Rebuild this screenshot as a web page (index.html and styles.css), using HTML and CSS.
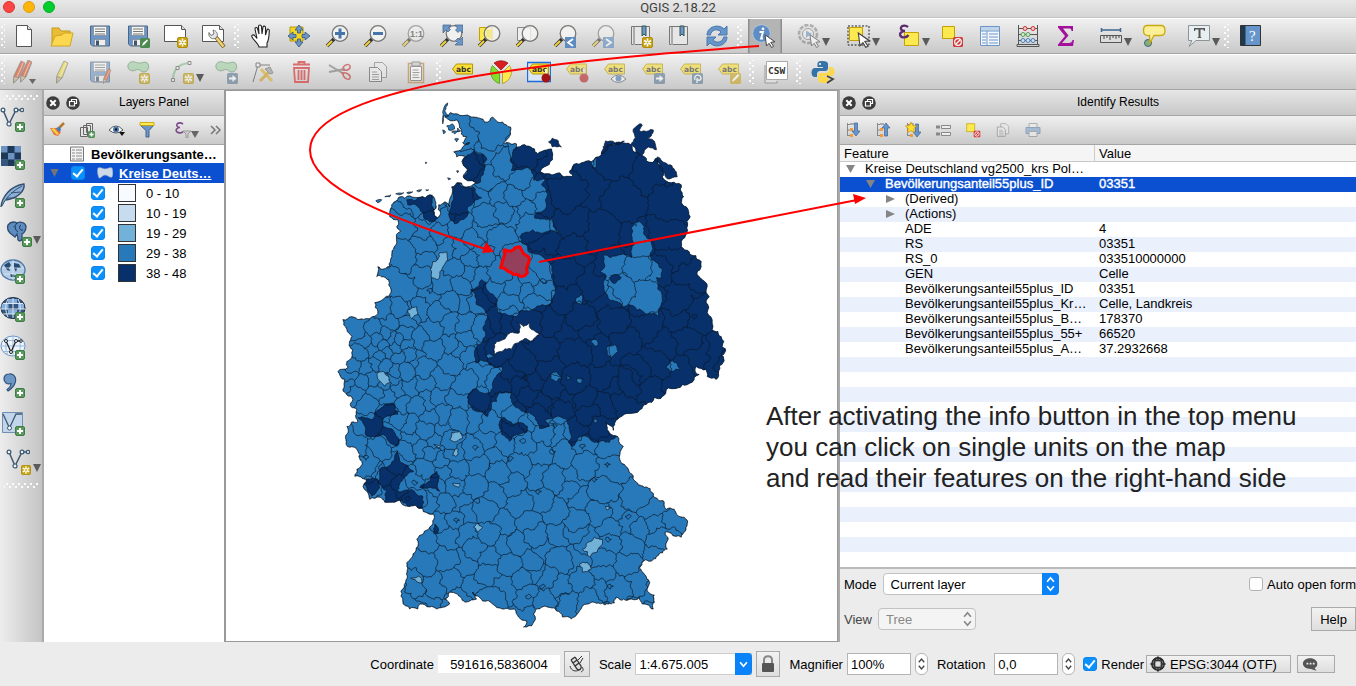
FILE: index.html
```html
<!DOCTYPE html>
<html lang="en">
<head>
<meta charset="utf-8">
<title>QGIS 2.18.22</title>
<link rel="stylesheet" href="styles.css">
</head>
<body>
<svg class="defs" aria-hidden="true">
  <defs>
    <symbol id="plus" viewBox="0 0 10 10"><rect x=".5" y=".5" width="9" height="9" rx="1.5" fill="#5a9a5c" stroke="#3f7c43"/><path d="M5 2v6M2 5h6" stroke="#fff" stroke-width="2"/></symbol>
    <symbol id="star" viewBox="0 0 11 11"><rect x=".5" y=".5" width="10" height="10" rx="1.5" fill="#c9a51a" stroke="#b08d05"/><path d="M5.500 1.500v8M2 3.500l7 4M9 3.500l-7 4" stroke="#fff" stroke-width="1.500"/><circle cx="5.500" cy="5.500" r="1" fill="#c9a51a"/></symbol>
    <symbol id="go" viewBox="0 0 11 11"><rect width="11" height="11" rx="1.500" fill="#5d7b93"/><path d="M2 4.500h3.500v-2.500l4 3.500-4 3.500v-2.500h-3.500z" fill="#fff"/></symbol>
    <symbol id="cursor" viewBox="0 0 12 14"><path d="M1 .8l10 7-4.200.5 2.800 4-2 1.200-2.500-4.200-2.600 2.700z" fill="#fff" stroke="#444"/></symbol>
    <symbol id="lens" viewBox="0 0 24 24"><path d="M9 15l-7 7" stroke="#333" stroke-width="3.500"/><path d="M7 17l-5 5" stroke="#f2d23c" stroke-width="2.200"/><circle cx="15" cy="9.500" r="7.800" fill="#f4f4f2" fill-opacity=".82" stroke="#777" stroke-width="1.300"/></symbol>
    <symbol id="floppy" viewBox="0 0 24 24"><path d="M2.500 2h19v20h-17l-2-2z" fill="#6c96c6" stroke="#47688e"/><path d="M5.500 2.500h13v9h-13z" fill="#f6f6f4" stroke="#777" stroke-width=".6"/><path d="M7 5h10M7 7.500h10M7 10h10" stroke="#777"/><path d="M6.500 15.500h11v6h-11z" fill="#eee" stroke="#777" stroke-width=".6"/><path d="M8 16.500h3v5h-3z" fill="#41566e"/></symbol>
    <symbol id="tag" viewBox="0 0 24 24"><path d="M1.500 9l4-5h16v10h-16z" fill="#f8de35" stroke="#b49608"/><text x="5" y="12" font-size="7.500" font-weight="bold" font-family="DejaVu Sans, sans-serif" fill="#333">abc</text></symbol>
    <symbol id="vec" viewBox="0 0 24 24"><path d="M3 3l6 14L16 3h6" fill="none" stroke="#3d5873" stroke-width="1.500"/><g fill="#eef3f8" stroke="#3d5873" stroke-width="1.200"><circle cx="3" cy="3" r="1.900"/><circle cx="9" cy="17" r="2"/><circle cx="16" cy="3" r="1.900"/><circle cx="22" cy="3" r="1.700"/></g></symbol>
    <symbol id="poly" viewBox="0 0 24 24"><path d="M2 5c2-5 7-3 10-2s8-3 10 1-1 8-4 8c-4 0-4-4-8-2s-9 0-8-5z" fill="#9fcfa2" stroke="#5f8d66"/></symbol>
    <symbol id="arr" viewBox="0 0 8 8"><path d="M0 0h8L4 8z" fill="#5a5a5a"/></symbol>
    <symbol id="pages" viewBox="0 0 24 24"><path d="M8.500 2.500h8l4 4v11h-12z" fill="#e8e8e8" stroke="#777"/><path d="M3.500 7.500h8l4 4v10h-12z" fill="#eee" stroke="#555"/><path d="M6 12h5M6 14.500h7M6 17h7M6 19.500h7" stroke="#777"/></symbol>
    <symbol id="tree" viewBox="0 0 16 16"><path d="M2.500 1v13M2.500 2.500h3M2.500 8h3M2.500 13.500h3" fill="none" stroke="#888"/><path d="M5 6h3v3H5zM5 12h3v3H5z" fill="#f29b38"/><path d="M5 1h4v2H5z" fill="#aaa"/></symbol>
    <symbol id="close" viewBox="0 0 14 14"><circle cx="7" cy="7" r="6.800" fill="#3c3c3c"/><path d="M4.300 4.300l5.400 5.400M9.700 4.300l-5.400 5.400" stroke="#fff" stroke-width="2"/></symbol>
    <symbol id="float" viewBox="0 0 14 14"><circle cx="7" cy="7" r="6.800" fill="#3c3c3c"/><path d="M5.500 5V3.500h5v4H9M3.500 5.500h5v4.500h-5z" fill="none" stroke="#fff" stroke-width="1.200"/></symbol>
    <symbol id="desel" viewBox="0 0 24 24"><path d="M2.500 2.500h12v12h-12z" fill="#fce94f" stroke="#c4a000"/><rect x="13" y="13" width="10" height="10" rx="1.500" fill="#d33c3c"/><circle cx="18" cy="18" r="3.300" fill="none" stroke="#fff" stroke-width="1.200"/><path d="M16 20l4-4" stroke="#fff" stroke-width="1.200"/></symbol>
    <symbol id="chev" viewBox="0 0 10 16"><path d="M2 6l3-3.500L8 6M2 10l3 3.500L8 10" fill="none" stroke="currentColor" stroke-width="1.500"/></symbol>
    <symbol id="pencil" viewBox="0 0 12 24"><path d="M8 1l4 2L6 18l-5.500 5 .5-7.500z" fill="currentColor" stroke="#666" stroke-width=".8"/><path d="M10 3L4 17" stroke="#fff" stroke-opacity=".5" stroke-width="1.200"/><path d="M1 16.500L6 18l-5.500 5z" fill="#cdb58a" stroke="#555" stroke-width=".6"/></symbol>
  </defs>
</svg>

<div class="window">
<header class="titlebar">
  <div class="lights"><i class="red"></i><i class="amber"></i><i class="green"></i></div>
  <h1>QGIS 2.18.22</h1>
</header>

<nav class="toolbar" aria-label="File and navigation">
  <span class="grip first"></span>
  <button aria-label="New"><svg viewBox="0 0 24 24"><path d="M4.500 1.500h11l4 4v17h-15z" fill="#fff" stroke="#555"/><path d="M15.500 1.500v4h4" fill="#ddd" stroke="#555"/></svg></button>
  <button aria-label="Open"><svg viewBox="0 0 24 24"><path d="M2 21V4h7l2 3h9v4" fill="#e9bd35" stroke="#c69a1b"/><path d="M1 22l4-10 7-1 2-2h9l-3 13z" fill="#fcd850" stroke="#d0a622"/></svg></button>
  <button aria-label="Save"><svg><use href="#floppy"/></svg></button>
  <button aria-label="Save as"><svg viewBox="0 0 24 24"><use href="#floppy"/><rect x="14" y="14" width="10" height="10" rx="1.500" fill="#4c8a50"/><path d="M16 22l1-3 4-3.500 1 1-3.500 4z" fill="#fff"/></svg></button>
  <button aria-label="New composer"><svg viewBox="0 0 24 24"><path d="M.5 1.500h17l4 4v12h-21z" fill="#fff" stroke="#555"/><path d="M17.500 1.500v4h4" fill="#ddd" stroke="#555"/><use href="#star" x="13" y="13" width="11" height="11"/></svg></button>
  <button aria-label="Composer manager"><svg viewBox="0 0 24 24"><path d="M.5 1.500h17l4 4v12h-21z" fill="#fff" stroke="#555"/><path d="M17.500 1.500v4h4" fill="#ddd" stroke="#555"/><path d="M13 12l9 11" stroke="#7a6420" stroke-width="4"/><path d="M14.500 14l7 8.500" stroke="#f0d274" stroke-width="2.500"/><path d="M15 13c1-3 0-6-4-7l1 4-3 1.500-2-3c-1 4 2 7 6 6z" fill="#e5e5e5" stroke="#777"/></svg></button>
  <span class="grip"></span>
  <button aria-label="Pan"><svg viewBox="0 0 24 24"><path d="M10 23c-1-4-5-6-7-10-1-2 1.500-3 3-1l2 2.500L6 5c0-2 2-2 2.500-.5L10 10l-.5-7.500c0-2 2.500-2 3 0L13 10l1-7c.5-1.500 2.500-1 2.500.5L16.500 11 18 6c.5-1.500 2.500-1 2.300.8C20 12 20 16 18 19v4z" fill="#fff" stroke="#222" stroke-width="1.100"/></svg></button>
  <button aria-label="Pan to selection"><svg viewBox="0 0 24 24"><path d="M3 3h13v14H3z" fill="#f5d71f" stroke="#b49608"/><path d="M12 1l4 5h-2.500v3h-3V6H8zM12 23l4-5h-2.500v-3h-3v3H8zM1 12l5-4v2.500h3v3H6V16zM23 12l-5-4v2.500h-3v3h3V16z" fill="#6c96c6" stroke="#3f5f86" stroke-width=".9"/></svg></button>
  <button aria-label="Zoom in"><svg viewBox="0 0 24 24"><use href="#lens"/><path d="M15 4.500v10M10 9.500h10" stroke="#4675ab" stroke-width="3"/></svg></button>
  <button aria-label="Zoom out"><svg viewBox="0 0 24 24"><use href="#lens"/><path d="M10 9.500h10" stroke="#4675ab" stroke-width="3"/></svg></button>
  <button aria-label="Zoom native" class="faded"><svg viewBox="0 0 24 24"><use href="#lens"/><text x="9" y="13" font-size="9" font-weight="bold" fill="#444">1:1</text></svg></button>
  <button aria-label="Zoom full"><svg viewBox="0 0 24 24"><use href="#lens"/><path d="M4 1h8L9.500 3.500l2 2-2.500 2.500-2-2L4 9zM24 1v8l-3-2.500-2 2L16.500 6l2-2L16 1zM24 21h-8l2.500-2.500-2-2 2.500-2.500 2 2L24 13z" fill="#6c96c6" stroke="#3f5f86" stroke-width=".7"/></svg></button>
  <button aria-label="Zoom to selection"><svg viewBox="0 0 24 24"><path d="M2.500 3.500h13v13h-13z" fill="#fce94f" stroke="#c4a000"/><use href="#lens"/><path d="M9 5.500h6v9.500c-6 0-7-6-6-9.500z" fill="#f3e88a"/></svg></button>
  <button aria-label="Zoom to layer"><svg viewBox="0 0 24 24"><path d="M2.500 3.500h13v13h-13z" fill="#eee" stroke="#888"/><use href="#lens"/></svg></button>
  <button aria-label="Zoom last"><svg viewBox="0 0 24 24"><use href="#lens"/><rect x="12" y="13" width="11" height="11" fill="#5e8cc0"/><path d="M20 15l-5 3.500 5 3.500" fill="none" stroke="#fff" stroke-width="1.800"/></svg></button>
  <button aria-label="Zoom next" class="faded"><svg viewBox="0 0 24 24"><use href="#lens"/><rect x="12" y="13" width="11" height="11" fill="#5e8cc0"/><path d="M15 15l5 3.500-5 3.500" fill="none" stroke="#fff" stroke-width="1.800"/></svg></button>
  <button aria-label="New bookmark"><svg viewBox="0 0 24 24"><path d="M2.500 2.500h18v18h-18z" fill="#e6e6e6" stroke="#777"/><path d="M5 3v18" stroke="#aaa" stroke-width="2"/><path d="M13 2h4v10l-2-2-2 2z" fill="#6c96c6" stroke="#355"/><use href="#star" x="13" y="13" width="11" height="11"/></svg></button>
  <button aria-label="Show bookmarks"><svg viewBox="0 0 24 24"><path d="M2.500 2.500h18v18h-18z" fill="#e6e6e6" stroke="#777"/><path d="M5 3v18" stroke="#aaa" stroke-width="2"/><path d="M13 2h4v10l-2-2-2 2z" fill="#6c96c6" stroke="#355"/></svg></button>
  <button aria-label="Refresh"><svg viewBox="0 0 24 24"><path d="M2 11C2 3 13-1 19 5l3-3v9h-9l3-3C12 4 6 6 5.500 11z" fill="#6595cb" stroke="#4a78ab"/><path d="M22 13c0 8-11 12-17 6l-3 3v-9h9l-3 3c4 4 10 2 10.500-3z" fill="#6595cb" stroke="#4a78ab"/></svg></button>
  <span class="grip"></span>
  <button aria-label="Identify features" class="pressed"><svg viewBox="0 0 24 24"><circle cx="9.500" cy="9.500" r="8.800" fill="#5e8dc3" stroke="#b9cde3" stroke-width=".8"/><circle cx="11" cy="4.800" r="1.400" fill="#fff"/><path d="M7.500 8H11l-2 6.500h2" fill="none" stroke="#fff" stroke-width="1.800"/><use href="#cursor" x="12" y="10" width="12" height="14"/></svg></button>
  <button aria-label="Run feature action" class="menu"><svg viewBox="0 0 24 24" class="dim"><circle cx="11" cy="10" r="9" fill="#ddd" stroke="#888" stroke-width="2.500" stroke-dasharray="4 1.500"/><circle cx="11" cy="10" r="5.500" fill="#eee" stroke="#777"/><path d="M9 6.500l6 3.500-6 3.500z" fill="#6c96c6"/><use href="#cursor" x="12" y="10" width="12" height="14"/></svg><svg class="arr"><use href="#arr"/></svg></button>
  <button aria-label="Select features" class="menu"><svg viewBox="0 0 24 24"><path d="M1 2h21v19H1z" fill="none" stroke="#222" stroke-dasharray="2 1.500"/><path d="M2.500 3.500h13v13h-13z" fill="#fce94f" stroke="#c4a000"/><use href="#cursor" x="10" y="8" width="14" height="16"/></svg><svg class="arr"><use href="#arr"/></svg></button>
  <button aria-label="Select by expression" class="menu"><svg viewBox="0 0 24 24"><path d="M7.500 8.500h14v13h-14z" fill="#fce94f" stroke="#c4a000"/><path d="M11 3C8 .5 3 2 4 5c.5 2 3 2 4 2-3 0-6 2-4.500 5 1.500 2 6 2 8-1" fill="none" stroke="#5b2a6b" stroke-width="2.300"/></svg><svg class="arr"><use href="#arr"/></svg></button>
  <button aria-label="Deselect"><svg><use href="#desel"/></svg></button>
  <button aria-label="Attribute table"><svg viewBox="0 0 24 24"><path d="M2.500 2.500h19v19h-19z" fill="#f4f8fc" stroke="#6c96c6"/><path d="M3 3h18v3.500H3z" fill="#bfd4ea"/><path d="M3 7h18M9 7v14M4 10h4M4 13h4M4 16h4M4 19h4M11 10h9M11 13h9M11 16h9M11 19h9" stroke="#6c96c6"/></svg></button>
  <button aria-label="Field calculator"><svg viewBox="0 0 24 24"><path d="M2.500 1v19M21.500 1v19M1 20.500h22v2H1zM2 4.500h20M2 10.500h20M2 16.500h20" fill="none" stroke="#555"/><g fill="#f6c9c9" stroke="#c33"><circle cx="9" cy="4.500" r="2"/><circle cx="17" cy="4.500" r="2"/></g><g fill="#cdeccd" stroke="#5a9a5c"><circle cx="7" cy="10.500" r="2"/><circle cx="12" cy="10.500" r="2"/></g><g fill="#cfe0f2" stroke="#4d7fb5"><circle cx="7" cy="16.500" r="2"/><circle cx="12" cy="16.500" r="2"/><circle cx="17" cy="16.500" r="2"/></g></svg></button>
  <button aria-label="Statistics"><svg viewBox="0 0 24 24"><path d="M4 2h15v5h-1.500c0-2-1-2.500-3-2.500H9l5.500 7L8 19h7c2 0 3-1 3.500-3H20l-1 6H4v-1.500l7-8.500-7-8.500z" fill="#a3119c"/></svg></button>
  <button aria-label="Measure" class="menu"><svg viewBox="0 0 24 24"><path d="M2 6h20M2.500 4v4M21.500 4v4" stroke="#3e6690" stroke-width="1.500"/><path d="M1.500 11.500h21v7h-21z" fill="#ddd" stroke="#555"/><path d="M5 12v3M8 12v2M11 12v4M14 12v2M17 12v3M20 12v2" stroke="#444"/></svg><svg class="arr"><use href="#arr"/></svg></button>
  <button aria-label="Map tips"><svg viewBox="0 0 24 24"><circle cx="6" cy="19" r="3.500" fill="#7fae80" stroke="#467"/><path d="M5 1.500h14c4 0 4 3 4 5s0 5-4 5h-7L8 19l-.5-7.500C2 12 1.500 9 1.500 6.500s.5-5 3.500-5z" fill="#fbf098" stroke="#c9a90e" stroke-width="1.300"/></svg></button>
  <button aria-label="Text annotation" class="menu"><svg viewBox="0 0 24 24"><path d="M1.500 1.500h21v15H9l-7 6 3-6H1.500z" fill="#e9eff1" stroke="#8b9499"/><path d="M7 7V4h11v3h-1l-.5-1.500h-3V13l1.500 1h-5l1.500-1V5.500h-3L8 7z" fill="#555"/></svg><svg class="arr"><use href="#arr"/></svg></button>
  <span class="grip"></span>
  <button aria-label="Help contents"><svg viewBox="0 0 24 24"><path d="M1.500 1.500h20v20h-20z" fill="#6595cb" stroke="#333"/><path d="M2 2h4.500v19H2z" fill="#23384d"/><text x="10" y="16.500" font-size="15" font-family="Liberation Serif, serif" fill="#fff">?</text></svg></button>
</nav>

<nav class="toolbar" aria-label="Editing and labels">
  <span class="grip first"></span>
  <button aria-label="Current edits" class="faded"><svg viewBox="0 0 24 24"><g color="#d8451c"><use href="#pencil" x="1" width="12" height="24"/><use href="#pencil" x="8" y="-1" width="12" height="24"/></g><path d="M17 19h7l-3.500 5z" fill="#222"/></svg></button>
  <button aria-label="Toggle editing" class="faded"><svg viewBox="0 0 24 24"><g color="#ecd838"><use href="#pencil" x="5" width="14" height="24"/></g></svg></button>
  <button aria-label="Save edits" class="faded"><svg viewBox="0 0 24 24"><use href="#floppy"/><g color="#e2521c"><use href="#pencil" x="14" y="8" width="10" height="16"/></g></svg></button>
  <button aria-label="Add feature" class="faded"><svg viewBox="0 0 24 24"><use href="#poly"/><use href="#star" x="13" y="13" width="11" height="11"/></svg></button>
  <button aria-label="Add circular string" class="menu faded"><svg viewBox="0 0 24 24"><path d="M2 20C2 9 8 4 18 3" fill="none" stroke="#82b886" stroke-width="2"/><g fill="#eee" stroke="#555"><path d="M.5 18.500h3v3h-3zM5 6.500h3v3H5zM17 1.500h3v3h-3z"/></g><use href="#star" x="12" y="13" width="11" height="11"/></svg><svg class="arr"><use href="#arr"/></svg></button>
  <button aria-label="Move feature" class="faded"><svg viewBox="0 0 24 24"><use href="#poly"/><use href="#go" x="13" y="13" width="11" height="11"/></svg></button>
  <button aria-label="Node tool" class="faded"><svg viewBox="0 0 24 24"><path d="M1 22L6 5h12" fill="none" stroke="#444"/><path d="M4 3h4v4H4z" fill="#eee" stroke="#444"/><path d="M9 9l11 12" stroke="#d9ad25" stroke-width="3"/><path d="M8 21L18 11" stroke="#c89a20" stroke-width="3"/><path d="M13 9l5-2 3 6-3 1z" fill="#999" stroke="#666"/></svg></button>
  <button aria-label="Delete selected" class="trash"><svg viewBox="0 0 24 24"><path d="M4 8h15l-1 14H5zM3 4.500h17M8.500 4V2h6v2M8.500 10v10M11.500 10v10M14.500 10v10" fill="none" stroke="#d85050" stroke-width="1.800"/></svg></button>
  <button aria-label="Cut" class="faded"><svg viewBox="0 0 24 24"><path d="M1 5l15 9M1 12l16-3" stroke="#777" stroke-width="2"/><path d="M15 9c0-4 6-6 7-3s-3 5-7 4zM14 13c4-1 9 2 8 5s-7 0-7-4z" fill="none" stroke="#c22e2e" stroke-width="1.500"/></svg></button>
  <button aria-label="Copy" class="faded"><svg><use href="#pages"/></svg></button>
  <button aria-label="Paste" class="faded"><svg viewBox="0 0 24 24"><path d="M4.500 3.500h15v19h-15z" fill="#e8e0d0" stroke="#b5803a" stroke-width="1.500"/><path d="M6.500 6.500h11v14h-11z" fill="#fff" stroke="#666"/><path d="M8 2h8v4H8z" fill="#ccc" stroke="#666"/><path d="M8.500 10h6M8.500 12.500h7M8.500 15h6M8.500 17.500h7" stroke="#777"/></svg></button>
  <span class="grip"></span>
  <button aria-label="Labeling"><svg><use href="#tag"/></svg></button>
  <button aria-label="Diagrams"><svg viewBox="0 0 24 24"><path d="M12 10L5 3a12 12 0 0 1 14 0z" fill="#d81e1e" stroke="#8a1515" stroke-width=".7"/><path d="M13.500 12.500l7-7a12 12 0 0 1-7 18z" fill="#fce94f" stroke="#a38a10" stroke-width=".7"/><path d="M10.500 12.500l-7-7a12 12 0 0 0 7 18z" fill="#83dd2b" stroke="#4b8d14" stroke-width=".7"/></svg></button>
  <button aria-label="Highlight pinned labels"><svg viewBox="0 0 24 24"><path d="M.5 2.500h23v19H.5z" fill="#d9e6f6" stroke="#1c6cd8" stroke-width="1.300"/><use href="#tag" width="24" height="24"/><path d="M18 9l2 0v7h-2z" fill="#eee"/><circle cx="19" cy="18" r="4.500" fill="#a31515"/></svg></button>
  <button aria-label="Pin labels" class="faded"><svg viewBox="0 0 24 24"><use href="#tag"/><path d="M18 8h2v7h-2z" fill="#fff" stroke="#888" stroke-width=".5"/><circle cx="19" cy="18" r="4.500" fill="#b92222"/></svg></button>
  <button aria-label="Show or hide labels" class="faded"><svg viewBox="0 0 24 24"><use href="#tag"/><path d="M8 19q7-8 15 0-8 7-15 0z" fill="#fff" stroke="#555"/><circle cx="15.500" cy="18.500" r="3" fill="#4c7db5"/></svg></button>
  <button aria-label="Move label" class="faded"><svg viewBox="0 0 24 24"><use href="#tag"/><use href="#go" x="13" y="13" width="11" height="11"/></svg></button>
  <button aria-label="Rotate label" class="faded"><svg viewBox="0 0 24 24"><use href="#tag"/><rect x="13" y="13" width="11" height="11" rx="1.500" fill="#5d7b93"/><path d="M16 20c-2-5 5-7 6-2 0 3-4 3-4 0M18 19v4" fill="none" stroke="#fff" stroke-width="1.300"/></svg></button>
  <button aria-label="Change label" class="faded"><svg viewBox="0 0 24 24"><use href="#tag"/><rect x="13" y="13" width="11" height="11" rx="1.500" fill="#c9a51a"/><path d="M15 22l1-3 5-5 1.500 1.500-5 5z" fill="#fff"/></svg></button>
  <span class="grip"></span>
  <button aria-label="Metadata search"><svg viewBox="0 0 24 24"><path d="M1 5v18h12v-2" fill="#ddd" stroke="#999"/><path d="M2.500 1.500h21v18h-21z" fill="#fff" stroke="#aaa"/><text x="4" y="14" font-size="9.500" font-weight="bold" font-family="DejaVu Sans Mono, monospace" fill="#333">CSW</text></svg></button>
  <span class="grip"></span>
  <button aria-label="Python console"><svg viewBox="0 0 24 24"><path d="M11.500 1C7 1 6.500 2.500 6.500 4v3h5.500v1H4C2 8 .5 9.500.5 12.500S2 17 4 17h2v-3c0-2 1.500-3 3-3h5c2 0 3-1 3-3V4c0-2-2-3-5.500-3z" fill="#3572a5"/><path d="M12 23c5 0 5.500-1.500 5.500-3v-3H12v-1h8c2 0 3.500-1.500 3.500-4.500S22 7 20 7h-2v3c0 2-1.500 3-3 3h-5c-2 0-3 1-3 3v4c0 2 1.500 3 5 3z" fill="#fcd84c"/><circle cx="9" cy="4" r="1" fill="#fff"/><path d="M16 16l6 3-6 4" fill="none" stroke="#444" stroke-width="1.800"/></svg></button>
</nav>

<main class="workspace">
  <nav class="sidebar" aria-label="Manage layers">
    <span class="grip-h"></span>
    <button aria-label="Add vector layer"><svg viewBox="0 0 26 26"><use href="#vec" width="24" height="24"/><use href="#plus" x="15" y="15" width="10" height="10"/></svg></button>
    <button aria-label="Add raster layer"><svg viewBox="0 0 26 26"><path d="M1 1h20v20H1z" fill="#6c93c2"/><path d="M7.500 1h7v7h-7zM1 7.500h7v7H1zM14.500 7.500H21v7h-6.500zM7.500 14.500h7V21h-7z" fill="#1e3857"/><path d="M1 14.500h7V21H1z" fill="#35577f"/><use href="#plus" x="15" y="15" width="10" height="10"/></svg></button>
    <button aria-label="Add SpatiaLite layer"><svg viewBox="0 0 26 26"><path d="M1 24C2 14 10 3 24 1c1 6-5 14-18 16" fill="#8db1d8" stroke="#33506f" stroke-width="1.400"/><path d="M2 23C6 14 14 7 22 3M7 15h10M11 10l9-1" fill="none" stroke="#33506f"/><use href="#plus" x="15" y="15" width="10" height="10"/></svg></button>
    <button aria-label="Add PostGIS layer" class="menu"><svg viewBox="0 0 26 26"><path d="M2 4c3-4 7-3 9-2 4-2 9 0 9 4 0 4-3 7-4 7v5c-1 3-5 2-4-1l-1-4-2 3-5-4C2 10 1 7 2 4z" fill="#5e8cc0" stroke="#2d4c70" stroke-width="1.300"/><path d="M11 2c-3 3-2 7 1 9M15 4c-3 2-1 6 2 5M8 5v1" fill="none" stroke="#1d3450"/><use href="#plus" x="16" y="16" width="10" height="10"/></svg><svg class="arr"><use href="#arr"/></svg></button>
    <button aria-label="Add MSSQL layer"><svg viewBox="0 0 26 26"><ellipse cx="13" cy="11" rx="12" ry="10" fill="#b3cbe5" stroke="#4d78a8" stroke-width="1.300"/><path d="M4 6l5-3 2 3-2 3 1 3-3-1zM14 4l5 1 2 4-4 0-1 4-2-4zM10 15l4 0 1 3-4 0z" fill="#274a70"/><path d="M2 9h22M4 15h18M13 1v20" stroke="#e4eef8" stroke-width=".7"/><use href="#plus" x="15" y="15" width="10" height="10"/></svg></button>
    <button aria-label="Add WMS layer"><svg viewBox="0 0 26 26"><ellipse cx="13" cy="11" rx="12" ry="10.500" fill="#35577f" stroke="#1c2f45"/><path d="M8 2h9v4H8zM1.500 7h7v5h-7zM18 7h6v5h-6zM8 13h9v4H8z" fill="#86addb"/><path d="M1 12h24M3 6.500h20M3 17h20M13 1v20M8 2c-3 6-3 12 0 18M18 2c3 6 3 12 0 18" fill="none" stroke="#dbe8f6"/><use href="#plus" x="15" y="15" width="10" height="10"/></svg></button>
    <button aria-label="Add WFS layer"><svg viewBox="0 0 26 26"><ellipse cx="13" cy="11" rx="12" ry="10" fill="#edf4fc" stroke="#6c96c6"/><path d="M1 11h24M4 5.500h18M4 16.500h18M13 1v20M8 2c-3 6-3 12 0 18M18 2c3 6 3 12 0 18" fill="none" stroke="#9bbbe0"/><path d="M6 6l5 11 5-11h5" fill="none" stroke="#222" stroke-width="1.300"/><g fill="#fff" stroke="#222"><circle cx="6" cy="6" r="1.500"/><circle cx="11" cy="17" r="1.500"/><circle cx="16" cy="6" r="1.500"/><circle cx="21" cy="6" r="1.300"/></g><use href="#plus" x="15" y="15" width="10" height="10"/></svg></button>
    <button aria-label="Add delimited text layer"><svg viewBox="0 0 26 26"><path d="M9 1c5-1 8 4 6 9-1 4-4 6-7 8l-1-1.500c3-2 4-4 4-6C7 12 4 9 4 6s2-5 5-5z" fill="#6c96c6" stroke="#33527a" stroke-width="1.200"/><use href="#plus" x="15" y="15" width="10" height="10"/></svg></button>
    <button aria-label="Add virtual layer"><svg viewBox="0 0 26 26"><path d="M2.500 1.500h20v20h-20z" fill="#c3d5ea" stroke="#6f8fb3"/><path d="M3 3l6.500 14L16 3h6" fill="none" stroke="#3d5873" stroke-width="1.300"/><circle cx="9.500" cy="17" r="2" fill="#fff" stroke="#3d5873"/><use href="#plus" x="15" y="15" width="10" height="10"/></svg></button>
    <button aria-label="New shapefile layer" class="menu"><svg viewBox="0 0 26 26"><use href="#vec" width="24" height="24"/><use href="#star" x="15" y="16" width="10" height="10"/></svg><svg class="arr"><use href="#arr"/></svg></button>
    <span class="grip-h"></span>
  </nav>

  <section class="panel layers">
    <header class="panel-title">
      <button aria-label="Close panel"><svg><use href="#close"/></svg></button><button aria-label="Float panel"><svg><use href="#float"/></svg></button>
      <h2>Layers Panel</h2>
    </header>
    <div class="panel-tools">
      <button aria-label="Style dock"><svg viewBox="0 0 16 16"><path d="M15 1l-6 6" stroke="#b9792d" stroke-width="2.500"/><path d="M1 6l7 0 4 4-3 4-4-1z" fill="#e5733d"/><path d="M7 6l4-1 1 3-2 2z" fill="#477cc0"/><path d="M2 7l6 6 2-1-5-6z" fill="#f3cf43"/></svg></button>
      <button aria-label="Add group"><svg viewBox="0 0 16 16"><path d="M1.500 5.500h7v9h-7zM4.500 3.500h7v9h-7zM7.500 1.500h6v9h-6z" fill="#e6e6e6" stroke="#666"/><use href="#plus" x="9" y="9" width="7" height="7"/></svg></button>
      <button aria-label="Visibility"><svg viewBox="0 0 16 16"><path d="M0 8q7-8 14 0-7 6-14 0z" fill="#fff" stroke="#555"/><circle cx="7" cy="7.500" r="3" fill="#4c7db5"/><circle cx="7" cy="7.500" r="1.200" fill="#111"/><path d="M10 10h6l-3 4z" fill="#111"/></svg></button>
      <button aria-label="Filter legend"><svg viewBox="0 0 16 16"><path d="M1 3h14L10 8.500V15H7V8.500z" fill="#6c96c6" stroke="#42648d"/><path d="M1 .5h14v3H1z" fill="#fce94f" stroke="#c4a000" stroke-width=".8"/></svg></button>
      <button aria-label="Filter by expression" class="wide"><svg viewBox="0 0 24 16"><path d="M8 2C5 0 1 1 2 4c.5 1.500 2.500 1.500 3 1.500C2 5.500 0 8 2 10c2 1.500 5 1 6-.5" fill="none" stroke="#7b4b8b" stroke-width="1.600"/><path d="M8 9h8l-3 3v4h-2v-4z" fill="#ccc" stroke="#999"/><path d="M16 9h8l-4 7z" fill="#666"/></svg></button>
      <button aria-label="More tools"><svg viewBox="0 0 16 16"><path d="M4 4l4 4-4 4M9 4l4 4-4 4" fill="none" stroke="#777" stroke-width="1.500"/></svg></button>
    </div>
    <ul class="layer-tree">
      <li class="table-layer"><svg viewBox="0 0 16 16"><path d="M1.500 1h13v14h-13z" fill="#f3f3f3" stroke="#777"/><path d="M3 4h3M7 4h6M3 7h3M7 7h6M3 10h3M7 10h6M3 13h3M7 13h6" stroke="#888"/></svg><b>Bevölkerungsante…</b></li>
      <li class="selected"><svg class="twist" viewBox="0 0 8 8"><path d="M0 0h8L4 8z" fill="#757575"/></svg><input type="checkbox" checked aria-label="Kreise Deutschland"><svg viewBox="0 0 16 16"><path d="M1 3c4-1 4 1 7 1s4-2 7-1c1 4 1 6 0 9-3 1-4-2-7-2s-3 3-6 3c-1-3-2-6-1-10z" fill="#cdd9e8" stroke="#a9b9cd" stroke-width=".6"/></svg><a href="#map">Kreise Deuts…</a></li>
      <li><label><input type="checkbox" checked><i class="sw c0"></i>0 - 10</label></li>
      <li><label><input type="checkbox" checked><i class="sw c1"></i>10 - 19</label></li>
      <li><label><input type="checkbox" checked><i class="sw c2"></i>19 - 29</label></li>
      <li><label><input type="checkbox" checked><i class="sw c3"></i>29 - 38</label></li>
      <li><label><input type="checkbox" checked><i class="sw c4"></i>38 - 48</label></li>
    </ul>
  </section>

  <section class="map" id="map"><svg id="districts" viewBox="226 91 612 551" role="img" aria-label="Districts of Germany by share of population aged 55 plus"></svg></section>

  <section class="panel identify">
    <header class="panel-title">
      <button aria-label="Close panel"><svg><use href="#close"/></svg></button><button aria-label="Float panel"><svg><use href="#float"/></svg></button>
      <h2>Identify Results</h2>
    </header>
    <div class="panel-tools">
      <button aria-label="Expand tree"><svg viewBox="0 0 16 16"><use href="#tree"/><path d="M9.500 1h3v8h2.500l-4 5-4-5h2.500z" fill="#6595cb" stroke="#3f6390" stroke-width=".7"/></svg></button>
      <button aria-label="Collapse tree"><svg viewBox="0 0 16 16"><use href="#tree"/><path d="M9.500 14h3V6h2.500l-4-5-4 5h2.500z" fill="#6595cb" stroke="#3f6390" stroke-width=".7"/></svg></button>
      <button aria-label="Expand new results"><svg viewBox="0 0 16 16"><use href="#tree"/><path d="M10.500 2h3v8H16l-4 5-4-5h2.500z" fill="#6595cb" stroke="#3f6390" stroke-width=".7"/><path d="M6 0l1.700 3.500 3.800.5-2.700 2.600.6 3.900L6 8.700l-3.400 1.800.6-3.900L.5 4l3.800-.5z" fill="#fce030" stroke="#d0940c" stroke-width=".8"/></svg></button>
      <button aria-label="Clear results"><svg viewBox="0 0 16 16"><path d="M1 3.500h4v3H1zM1 10.500h4v3H1z" fill="#888"/><path d="M6.500 3.500h9v3h-9zM6.500 10.500h9v3h-9z" fill="#eee" stroke="#888"/></svg></button>
      <button aria-label="Clear highlights"><svg><use href="#desel"/></svg></button>
      <button aria-label="Copy feature" class="faded"><svg><use href="#pages"/></svg></button>
      <button aria-label="Print" class="faded"><svg viewBox="0 0 16 16"><path d="M4 1.500h8v5H4z" fill="#eee" stroke="#888"/><path d="M1 5.500h14v6H1z" fill="#7ea3cc" stroke="#5f7f9f"/><path d="M4 9.500h8v5H4z" fill="#eee" stroke="#888"/></svg></button>
    </div>
    <div class="results">
      <table>
        <thead><tr><th>Feature</th><th>Value</th></tr></thead>
        <tbody>
          <tr class="d0"><td><i class="open"></i>Kreise Deutschland vg2500_krs Pol…</td><td></td></tr>
          <tr class="d1 current"><td><i class="open"></i>Bevölkerungsanteil55plus_ID</td><td>03351</td></tr>
          <tr class="d2"><td><i class="shut"></i>(Derived)</td><td></td></tr>
          <tr class="d2"><td><i class="shut"></i>(Actions)</td><td></td></tr>
          <tr class="d2"><td>ADE</td><td>4</td></tr>
          <tr class="d2"><td>RS</td><td>03351</td></tr>
          <tr class="d2"><td>RS_0</td><td>033510000000</td></tr>
          <tr class="d2"><td>GEN</td><td>Celle</td></tr>
          <tr class="d2"><td>Bevölkerungsanteil55plus_ID</td><td>03351</td></tr>
          <tr class="d2"><td>Bevölkerungsanteil55plus_Kr…</td><td>Celle, Landkreis</td></tr>
          <tr class="d2"><td>Bevölkerungsanteil55plus_B…</td><td>178370</td></tr>
          <tr class="d2"><td>Bevölkerungsanteil55plus_55+</td><td>66520</td></tr>
          <tr class="d2"><td>Bevölkerungsanteil55plus_A…</td><td>37.2932668</td></tr>
        </tbody>
      </table>
    </div>
    <form class="options">
      <div class="option-row">
        <label for="mode">Mode</label>
        <span class="select mode"><select id="mode"><option>Current layer</option></select><svg><use href="#chev"/></svg></span>
        <label class="auto"><input type="checkbox">Auto open form</label>
      </div>
      <div class="option-row">
        <label for="view" class="muted">View</label>
        <span class="select view"><select id="view" disabled><option>Tree</option></select><svg><use href="#chev"/></svg></span>
        <button type="button" class="push help">Help</button>
      </div>
    </form>
  </section>
</main>

<footer class="statusbar">
  <label for="coord">Coordinate</label><input id="coord" class="coord" value="591616,5836004">
  <button class="push square" aria-label="Toggle extents"><svg viewBox="0 0 20 20"><path d="M4 6l6 9c2 2 5 0 4-3L8 3M4 6l4-3M6 9l4-3M8 12l4-3" fill="#ddd" stroke="#333" stroke-width="1.300"/><path d="M11 6l4-4M13 9l3-5M3 12c1 5 6 6 9 4M15 13c2 3 1 4-1 5" fill="none" stroke="#333"/></svg></button>
  <label for="scale" class="gap">Scale</label><span class="select scale"><input id="scale" value="1:4.675.005"><svg viewBox="0 0 10 16"><path d="M2 6.500L5 10l3-3.500" fill="none" stroke="#fff" stroke-width="1.500"/></svg></span>
  <button class="push square lock" aria-label="Lock scale"><svg viewBox="0 0 20 20"><path d="M6 9V6c0-5 8-5 8 0v3" fill="none" stroke="#888" stroke-width="2"/><rect x="4" y="9" width="12" height="9" rx="1" fill="#555"/></svg></button>
  <label for="mag" class="gap">Magnifier</label><input id="mag" class="num" value="100%"><button class="spin" aria-label="Step magnifier"><svg><use href="#chev"/></svg></button>
  <label for="rot" class="gap">Rotation</label><input id="rot" class="num rotation" value="0,0"><button class="spin" aria-label="Step rotation"><svg><use href="#chev"/></svg></button>
  <label class="render"><input type="checkbox" checked>Render</label>
  <button class="push crs"><svg viewBox="0 0 18 18"><circle cx="9" cy="9" r="7" fill="#777" stroke="#222" stroke-width="1.500"/><path d="M9 0v18M0 9h18M4 4q5 3 10 0M4 14q5-3 10 0M6 3q-3 6 0 12M12 3q3 6 0 12" fill="none" stroke="#222"/><circle cx="9" cy="9" r="3" fill="#ddd"/></svg>EPSG:3044 (OTF)</button>
  <button class="push messages" aria-label="Messages"><svg viewBox="0 0 20 16"><path d="M9 1c5 0 8 3 8 6s-1 4-3 5l2 3-6-2C4 13 1 10 1 7s3-6 8-6z" fill="#555"/><path d="M5 7h2M8.500 7h2M12 7h2" stroke="#eee" stroke-width="2"/></svg></button>
</footer>
</div>

<svg class="arrows" viewBox="0 0 1356 686" aria-hidden="true">
  <path d="M759 46C600 58 310 80 310 150C310 190 400 220 485 249" fill="none" stroke="#f00" stroke-width="2"/>
  <path d="M494 252l-12 1 4-11z" fill="#f00"/>
  <path d="M539 262L857 200" fill="none" stroke="#f00" stroke-width="2"/>
  <path d="M866 198l-11 6-2-10z" fill="#f00"/>
</svg>
<p class="note">After activating the info button in the top menu<br>you can click on single units on the map<br>and read their features on the right-hand side</p>
<script src="map.js"></script>
</body>
</html>
```
FILE: styles.css
```css
* { box-sizing: border-box; }
body { margin: 0; background: #ececec; color: #000; font: 13px/15px "Liberation Sans", Arial, sans-serif; overflow: hidden; }
h1, h2, p, ul { margin: 0; padding: 0; }
button, input, select { font: inherit; color: inherit; margin: 0; }
button { padding: 0; border: 0; background: none; }
svg { display: block; flex: none; }
.defs { position: absolute; width: 0; height: 0; }
.window { display: flex; flex-direction: column; height: 100vh; }

.titlebar { position: relative; height: 18px; background: linear-gradient(#e8e8e8, #d5d5d5); display: flex; justify-content: center; align-items: center; border-bottom: 1px solid #c4c4c4; }
.titlebar h1 { font: 13px/15px Roboto, sans-serif; color: #404040; padding-bottom: 2px; }
.lights { position: absolute; left: 3px; top: 1px; display: flex; gap: 8px; }
.lights i { width: 12px; height: 12px; border-radius: 50%; border: 1px solid #e0332e; background: #fc4645; }
.lights .amber { background: #fdb50a; border-color: #e09e12; }
.lights .green { background: #00ce2c; border-color: #0cae28; }

.toolbar { display: flex; align-items: center; height: 36px; background: linear-gradient(#f0f0f0, #c9c9c9); border-top: 1px solid #fff; border-bottom: 1px solid #a5a5a5; }
.toolbar button { display: flex; align-items: center; justify-content: center; flex: none; width: 38px; height: 34px; }
.toolbar svg { width: 24px; height: 24px; }
.toolbar .menu { width: 50px; padding-left: 14px; justify-content: flex-start; gap: 1px; }
.toolbar .arr, .sidebar .arr { width: 8px; height: 8px; margin-top: 12px; }
.toolbar .pressed { background: linear-gradient(90deg, #8d8d8d 0 1px, #b4b4b4 2px 32px, #8d8d8d 33px) no-repeat 3px 0 / 34px 34px; }
.faded svg:not(.arr), .dim { opacity: .6; }
.trash svg { opacity: .8; }
.grip { flex: none; width: 9px; height: 24px; background: radial-gradient(circle, #fbfbfb 1px, transparent 1px) 0 0 / 4px 6px repeat-y, radial-gradient(circle, #fbfbfb 1px, transparent 1px) 3px 3px / 4px 6px repeat-y; }
.grip.first { width: 5px; }

.workspace { flex: 1; min-height: 0; display: grid; grid-template-columns: 43px 181px minmax(0, 1fr) 518px; }
.sidebar { background: linear-gradient(90deg, #ededed, #c4c4c4); border-right: 1px solid #aaa; padding-top: 4px; display: flex; flex-direction: column; }
.sidebar button { flex: none; height: 38px; display: flex; align-items: center; padding-bottom: 2px; }
.sidebar svg { width: 26px; height: 26px; }
.sidebar .menu { padding-left: 6px; gap: 1px; }
.grip-h { flex: none; height: 8px; margin: 0 4px; background: radial-gradient(circle, #fbfbfb 1px, transparent 1px) 0 0 / 6px 4px repeat-x, radial-gradient(circle, #fbfbfb 1px, transparent 1px) 3px 3px / 6px 4px repeat-x; }

.panel { display: flex; flex-direction: column; min-width: 0; overflow: hidden; }
.layers { border-left: 1px solid #aaa; background: #fff; }
.panel-title { flex: none; height: 26px; display: flex; align-items: center; gap: 6px; padding: 0 2px; background: linear-gradient(#e6e6e6, #c8c8c8); border-bottom: 1px solid #a5a5a5; }
.panel-title svg { width: 14px; height: 14px; }
.panel-title h2 { flex: 1; text-align: center; font-size: 12px; font-weight: normal; line-height: 15px; }
.panel-tools { flex: none; height: 29px; display: flex; align-items: center; gap: 14px; padding-left: 5px; background: linear-gradient(#f0f0f0, #c9c9c9); border-bottom: 1px solid #a5a5a5; }
.panel-tools svg { width: 16px; height: 16px; }
.panel-tools .wide svg { width: 24px; }
.panel-tools .wide { padding-left: 6px; margin-right: -6px; }

.layer-tree { list-style: none; }
.layer-tree li { height: 20px; display: flex; align-items: center; }
.layer-tree .table-layer { height: 18px; padding-left: 25px; gap: 6px; }
.layer-tree li svg { width: 16px; height: 16px; }
.layer-tree .selected { background: #0a50d0; color: #fff; font-weight: bold; padding-left: 6px; }
.layer-tree li .twist { width: 9px; height: 8px; margin-right: 12px; }
.selected input { margin-right: 12px; }
.selected a { color: inherit; margin-left: 6px; }
.layer-tree label { display: flex; align-items: center; padding-left: 47px; }
.sw { width: 18px; height: 18px; margin: 0 10px 0 13px; border: 1px solid #333; }
.c0 { background: #f7fbff; } .c1 { background: #c8dcf0; } .c2 { background: #73b2d8; } .c3 { background: #2879b9; } .c4 { background: #08306b; }

input[type=checkbox] { appearance: none; flex: none; width: 14px; height: 14px; border-radius: 3px; border: 1px solid #b5b5b5; background: #fff; display: grid; place-items: center; }
input[type=checkbox]:checked { background: #0a91fc; border-color: #0a84ee; }
input[type=checkbox]:checked::before { content: ""; width: 4px; height: 8px; margin-top: -2px; border: solid #fff; border-width: 0 2px 2px 0; transform: rotate(40deg); }

.map { background: #fff; border: solid #999; border-width: 1px 1px 1px 2px; min-width: 0; min-height: 0; overflow: hidden; }
.map svg { width: 100%; height: 100%; }

.identify { border-left: 2px solid #aaa; background: #ececec; }
.results { flex: 1; min-height: 0; background: repeating-linear-gradient(#fff 0 15px, #eaf1fd 15px 30px) 0 17px; border-bottom: 2px solid #bbb; overflow: hidden; }
table { width: 100%; border-collapse: separate; border-spacing: 0; table-layout: fixed; }
th { width: 254px; height: 17px; padding: 0 4px; text-align: left; font-weight: normal; line-height: 15px; background: #f5f5f5; border-bottom: 1px solid #c8c8c8; }
th + th { width: auto; border-left: 1px solid #ccc; }
td { height: 15px; padding: 0 5px; white-space: nowrap; line-height: 14px; vertical-align: top; }
td i { float: left; width: 9px; height: 8px; margin: 3px 0 0 -19px; background: #858585; clip-path: polygon(0 0, 100% 0, 50% 100%); }
td .shut { clip-path: polygon(0 0, 100% 50%, 0 100%); }
.d0 td:first-child { padding-left: 25px; }
.d1 td:first-child { padding-left: 45px; }
.d2 td:first-child { padding-left: 65px; }
.current { background: #0a50d0; color: #fff; -webkit-text-stroke: 0.4px #fff; }

.options { flex: none; padding: 3px 0 11px 4px; display: flex; flex-direction: column; gap: 11px; }
.option-row { display: flex; align-items: center; height: 24px; gap: 6px; white-space: nowrap; }
.select { position: relative; display: block; height: 22px; }
.select select { appearance: none; width: 100%; height: 100%; padding: 0 7px; background: #fff; border: 1px solid #c2c2c2; border-radius: 4px; outline: 0; }
.select svg { position: absolute; right: 0; top: 0; width: 17px; height: 100%; padding: 2px; background: #0a82f8; color: #fff; border-radius: 0 4px 4px 0; }
.mode { width: 176px; }
.view { width: 98px; }
.view select { background: #f4f4f4; color: #888; opacity: 1; }
.view svg { background: none; color: #888; }
.muted { color: #444; }
.auto { margin-left: auto; display: flex; align-items: center; gap: 4px; }
.push { display: flex; align-items: center; justify-content: center; border: 1px solid #aaa; background: linear-gradient(#f2f2f2, #dedede); height: 24px; }
.help { width: 45px; margin-left: auto; }

.statusbar { flex: none; height: 44px; display: flex; align-items: center; justify-content: flex-end; gap: 4px; padding-right: 21px; white-space: nowrap; }
.statusbar > input, .scale input { height: 22px; padding: 0 3px; border: 1px solid #b5b5b5; background: #fff; border-radius: 0; }
.statusbar .coord { width: 122px; height: 18px; border: 0; text-align: center; }
.statusbar .num { width: 64px; }
.statusbar .rotation { margin-left: 5px; }
.square { width: 26px; height: 26px; }
.square svg { width: 20px; height: 20px; }
.lock { width: 24px; }
.gap { margin-left: 5px; }
.scale { width: 117px; }
.scale input { width: 100%; border-color: #ccc; }
.spin { width: 13px; height: 22px; border: 1px solid #b5b5b5; border-radius: 6px; background: #fff; color: #444; }
.spin svg { width: 11px; height: 18px; padding: 1px; }
.render { display: flex; align-items: center; gap: 4px; margin: 0 -2px 0 4px; }
.crs { width: 145px; height: 18px; gap: 4px; justify-content: flex-start; padding-left: 3px; }
.crs svg { width: 16px; height: 16px; }
.messages { width: 38px; height: 18px; margin-left: 2px; justify-content: flex-start; padding-left: 4px; }
.messages svg { width: 18px; height: 15px; }

.arrows { position: absolute; left: 0; top: 0; width: 1356px; height: 686px; pointer-events: none; }
.note { position: absolute; left: 766px; top: 401px; font-size: 26px; line-height: 31px; color: #222; white-space: nowrap; }
```
FILE: map.js
```js
(function () {
  var svg = document.getElementById('districts');
  var NS = 'http://www.w3.org/2000/svg';
  var state = 7;
  function rnd() { state = (state * 16807) % 2147483647; return state / 2147483647 - 0.5; }
  function el(name, attrs, parent) {
    var e = document.createElementNS(NS, name);
    for (var k in attrs) e.setAttribute(k, attrs[k]);
    parent.appendChild(e);
    return e;
  }
  function pairs(s) {
    return s.trim().split(/\s+/).map(function (p) { return p.split(',').map(Number); });
  }
  // Splits a segment again and again, moving each midpoint sideways
  function rough(a, b, amp, out) {
    var dx = b[0] - a[0], dy = b[1] - a[1], len = Math.sqrt(dx * dx + dy * dy);
    if (len < 3) { out.push(b); return; }
    var k = rnd() * amp;
    var m = [(a[0] + b[0]) / 2 - dy * k, (a[1] + b[1]) / 2 + dx * k];
    rough(a, m, amp, out); rough(m, b, amp, out);
  }
  function line(pts) {
    return 'M' + pts.map(function (p) { return p[0].toFixed(1) + ' ' + p[1].toFixed(1); }).join('L');
  }
  function ring(s, amp) {
    var p = pairs(s), out = [p[0]];
    p.forEach(function (a, i) { rough(a, p[(i + 1) % p.length], amp, out); });
    return line(out) + 'Z';
  }

  var land = '445,117 458,114 468,115 474,117 485,122 493,117 497,121 503,122 511,127 511,133 508,139 504,143 510,143 517,144 516,150 518,147 527,146 535,149 538,154 547,150 552,149 553,160 545,167 541,172 545,174 550,174 560,173 565,177 573,177 570,172 573,167 582,163 592,162 598,157 602,153 607,147 615,145 625,143 632,145 635,152 642,155 647,161 655,161 658,158 663,168 663,177 672,183 682,185 683,193 687,207 691,217 688,227 688,233 682,242 682,247 690,252 702,262 702,267 698,272 703,280 708,287 707,293 710,297 707,303 708,313 713,323 713,330 722,337 723,347 726,349 724,363 717,380 708,377 707,370 697,367 696,372 700,375 683,385 677,389 667,390 663,397 655,398 647,405 638,413 628,414 618,420 614,431 609,425 606,422 608,428 612,435 624,447 620,458 625,465 630,473 637,483 648,488 655,498 665,503 667,510 675,510 685,518 686,532 682,538 672,534 666,533 669,540 668,550 658,557 640,569 645,575 650,585 648,592 655,596 654,610 643,605 640,598 632,600 617,598 615,604 603,604 588,605 580,612 575,618 572,620 563,618 557,612 543,608 537,610 535,622 527,628 524,628 527,622 519,618 515,610 503,610 493,605 483,602 473,593 477,600 467,603 458,595 450,593 445,600 450,605 445,608 430,608 420,605 418,610 410,610 403,602 406,583 407,567 413,557 417,540 430,528 434,515 422,509 408,507 400,501 395,503 385,503 380,498 370,500 367,492 364,485 367,480 355,477 357,470 362,462 360,455 350,448 346,440 347,427 358,422 357,410 351,407 353,400 343,390 345,380 338,372 348,368 347,362 353,350 352,337 347,330 343,320 352,317 358,320 373,317 378,312 375,303 385,298 391,293 389,280 377,277 378,267 390,267 392,257 397,243 398,220 390,217 392,207 400,197 410,196 430,195 434,197 436,205 434,211 438,218 441,214 439,205 445,202 450,207 451,197 452,187 457,183 465,187 473,185 477,183 468,181 464,175 468,170 463,160 467,157 457,157 454,152 463,147 470,143 463,143 467,137 460,128 457,120';

  var dark = [
    '474,151 487,158 485,170 481,182 473,184 464,177 468,170 463,160',
    '516,148 540,140 560,148 556,165 541,180 534,180 530,168 522,170 512,171',
    '547,172 600,120 700,120 740,300 740,400 612,440 610,443 595,443 587,437 573,447 569,442 570,430 568,423 555,418 545,422 550,427 540,429 538,422 530,413 515,407 512,393 500,393 497,402 491,403 488,417 473,410 468,397 477,389 491,393 493,383 502,373 503,368 487,362 476,363 477,347 486,337 487,320 485,310 477,305 471,290 482,280 487,283 490,293 497,303 498,313 517,317 520,312 537,307 550,305 556,293 552,277 550,263 543,257 530,253 528,247 520,237 533,230 547,232 560,232 552,219 547,220 535,218 537,213 547,205 548,195 542,185',
    '407,200 420,197 432,195 433,207 438,218 430,222 418,207 408,205',
    '452,187 458,183 465,187 473,187 482,198 468,207 467,217 455,224 450,218 452,203',
    '375,413 385,405 395,405 398,415 385,418 383,427 398,438 397,447 383,435 367,437 358,418 373,420',
    '398,452 405,465 414,472 403,480 398,492 412,490 423,497 422,510 402,501 395,503 385,503 387,492 378,483 380,470 387,468',
    '378,480 380,488 372,497 364,485 367,480',
    '437,472 440,492 420,488',
    '503,418 513,425 528,427 527,433 517,435 510,442 502,435 500,428'
  ];
  var mid = [
    '638,222 645,227 645,235 653,247 652,260 663,270 663,278 657,278 659,290 663,302 659,310 660,317 647,315 637,310 635,307 623,307 610,300 606,293 607,277 601,272 603,255 620,255 632,258 635,243 632,228',
    '592,162 598,157 597,167 594,169', '577,298 582,295 583,304 577,303',
    '591,341 597,340 599,345 595,347', '608,347 615,345 619,352 612,358 608,355',
    '667,367 673,361 681,369 673,372', '551,375 557,372 562,378 557,382 551,379',
    '567,375 572,378 568,381', '578,379 584,379 582,384 578,383', '594,421 598,420 597,424',
    '486,357 490,354 495,357 489,359'
  ];
  var light = [
    '440,253 447,252 448,260 442,270 438,280 432,278 433,262 438,260',
    '408,310 417,307 418,315 412,319', '378,373 385,373 391,383 385,387 379,381',
    '452,433 460,432 463,439 450,440', '434,445 441,447 439,449', '455,450 459,450 456,457 453,456',
    '453,484 460,484 459,488 454,486', '477,524 483,528 478,533 474,528',
    '411,579 419,577 422,584 413,580', '595,538 603,540 603,545 590,558 583,550',
    '580,565 588,563 592,570 583,573', '606,507 611,509 608,511'
  ];
  var isles = [
    '448,103 445,111 449,116 444,116 443,124 443,112', '447,126 453,124 455,129 449,130',
    '443,130 446,132 444,134', '452,132 458,131 455,134', '455,139 459,139 457,142', '458,128 461,131 458,132',
    '376,201 382,200 378,203', '385,197 391,195 390,197', '396,194 404,193 399,195', '407,193 413,192 409,194',
    '417,191 422,190 419,192', '426,190 429,190 427,191', '426,162 427,163 426,164', '457,171 459,171 458,173', '448,178 451,179 449,180'
  ];
  var darkIsles = [
    '549,142 553,138 559,141 562,147 553,147', '634,129 640,124 643,125 640,131 649,131 654,130 652,136 648,138 656,144 657,150 649,147 643,155 637,152 632,145 636,138',
    '602,153 606,141 625,141 622,143 608,145 604,154', '658,157 666,163 677,172 678,177 668,179 664,172', '610,278 617,275 622,278 615,284'
  ];

  var seeds = pairs(
    // Schleswig-Holstein, Hamburg, Mecklenburg
    '462,140 495,133 472,165 490,152 505,165 525,157 546,160 490,178 522,180 533,190 483,195 500,197 515,198 505,210 525,210 540,203 ' +
    '565,190 590,185 620,160 650,172 625,200 665,165 672,205 570,225 600,235 640,240 665,235 550,240 ' +
    // Lower Saxony
    '405,207 402,225 425,228 418,205 428,210 445,212 460,203 460,225 442,235 447,250 425,245 405,258 425,262 420,275 460,250 475,240 480,255 488,215 470,260 457,268 445,285 ' +
    '485,230 512,215 530,222 500,240 515,262 500,272 480,278 495,288 470,272 460,285 515,288 530,280 543,270 527,292 540,290 535,300 512,302 480,300 490,320 ' +
    // Westphalia and Rhineland
    '405,290 430,295 450,300 465,300 420,310 398,310 412,314 385,310 440,312 450,325 465,325 482,330 432,330 405,325 390,322 375,330 360,325 365,342 360,355 372,350 378,340 385,335 ' +
    '384,345 390,340 395,348 388,353 380,358 385,365 377,363 400,340 407,345 398,358 408,355 405,335 420,340 415,360 425,368 435,350 450,345 450,362 440,378 425,385 460,350 470,355 467,340 405,370 395,370 392,380 ' +
    '355,365 365,367 350,375 362,383 348,385 357,392 372,380 375,392 385,382 368,402 389,397 403,405 398,390 410,388 400,420 410,425 418,407 428,402 440,398 465,385 480,375 460,400 443,415 430,418 ' +
    '390,412 370,427 390,435 355,440 378,447 366,458 410,440 425,430 445,430 457,420 475,420 420,450 405,450 398,465 385,478 370,472 373,488 400,487 412,480 428,468 433,455 415,497 388,495 440,460 442,475 436,488 ' +
    '450,440 437,443 455,453 473,450 485,440 490,425 458,470 455,487 428,502 478,465 475,487 495,495 ' +
    // Harz, Thuringia, Saxony
    '478,400 500,385 505,405 515,375 525,365 545,350 520,385 530,395 545,405 535,380 548,370 555,390 570,400 562,410 575,385 585,400 605,380 615,390 630,385 640,375 655,365 650,390 620,400 ' +
    '605,405 590,415 600,428 578,430 552,405 540,415 498,350 482,352 510,320 530,320 550,320 570,330 580,320 590,330 575,350 600,345 620,345 610,325 645,325 665,345 685,340 700,355 715,355 680,370 ' +
    '680,320 695,318 680,300 690,270 672,255 620,290 645,295 655,270 640,268 615,268 640,245 595,285 565,270 575,250 570,300 605,298 ' +
    // Franconia and Upper Palatinate
    '513,430 515,415 527,420 545,435 525,445 505,445 495,460 520,465 540,455 555,435 565,455 585,445 612,448 585,465 575,478 610,470 605,490 570,492 555,480 540,475 ' +
    '510,485 500,475 540,500 520,505 580,500 600,515 555,512 575,520 620,510 650,510 635,500 655,525 675,520 660,540 630,525 610,530 ' +
    // Baden-Württemberg
    '445,505 460,505 442,522 455,520 467,515 485,510 450,535 468,535 425,545 477,550 490,535 502,525 530,525 505,545 490,558 465,563 445,560 425,563 417,590 ' +
    '435,585 450,580 475,590 490,575 510,565 505,588 525,580 490,600 460,602 425,600 405,600 ' +
    // Swabia and Upper Bavaria
    '535,535 520,545 530,562 545,550 560,535 575,530 588,540 560,560 575,560 545,580 535,575 560,590 585,585 575,605 590,597 600,590 605,575 605,560 610,545 ' +
    '630,545 640,530 660,550 625,565 635,585 645,595 615,585 565,605 545,598 530,595 525,620 650,605'
  );

  // Voronoi cell of each seed: clip a box by every perpendicular bisector
  function cell(s) {
    var poly = [[300, 60], [760, 60], [760, 660], [300, 660]];
    seeds.forEach(function (t) {
      var nx = t[0] - s[0], ny = t[1] - s[1];
      if (!nx && !ny) return;
      var c = nx * (s[0] + t[0]) / 2 + ny * (s[1] + t[1]) / 2, next = [];
      poly.forEach(function (a, i) {
        var b = poly[(i + 1) % poly.length];
        var da = nx * a[0] + ny * a[1] - c, db = nx * b[0] + ny * b[1] - c;
        if (da <= 0) next.push(a);
        if ((da < 0 && db > 0) || (da > 0 && db < 0)) {
          var u = da / (da - db);
          next.push([a[0] + (b[0] - a[0]) * u, a[1] + (b[1] - a[1]) * u]);
        }
      });
      poly = next;
    });
    return poly;
  }

  var outline = ring(land, 0.45);
  var clip = el('clipPath', { id: 'land' }, el('defs', {}, svg));
  el('path', { d: outline }, clip);
  var g = el('g', { 'clip-path': 'url(#land)', stroke: '#0b1a2a', 'stroke-width': 0.7, 'stroke-linejoin': 'round' }, svg);
  el('path', { d: outline, fill: '#2879b9' }, g);
  dark.forEach(function (s) { el('path', { d: ring(s, 0.4), fill: '#08306b' }, g); });
  mid.forEach(function (s) { el('path', { d: ring(s, 0.4), fill: '#2879b9' }, g); });

  var seen = {}, d = '';
  seeds.forEach(function (s) {
    var p = cell(s);
    p.forEach(function (a, i) {
      var b = p[(i + 1) % p.length];
      var key = Math.round(a[0] + b[0]) + ':' + Math.round(a[1] + b[1]);
      if (seen[key]) return;
      seen[key] = true;
      var out = [a];
      rough(a, b, 0.6, out);
      d += line(out);
    });
  });
  el('path', { d: d, fill: 'none' }, g);
  el('path', { d: ring('435,525 439,530 438,534 434,534', 0.4), fill: '#08306b' }, g);
  light.forEach(function (s) { el('path', { d: ring(s, 0.4), fill: '#73b2d8' }, g); });
  // Enclosed city districts
  [[366, 458], [415, 483], [408, 499], [457, 521], [477, 501], [511, 459], [539, 492], [595, 480], [608, 465], [583, 447], [553, 452], [523, 441], [529, 597], [543, 587], [611, 587], [629, 517], [609, 540], [695, 317], [525, 378], [430, 291], [544, 281], [555, 426], [476, 448]].forEach(function (c) {
    var x = c[0], y = c[1];
    el('path', { d: ring((x - 3) + ',' + y + ' ' + x + ',' + (y - 2) + ' ' + (x + 3) + ',' + y + ' ' + x + ',' + (y + 3), 0.8), fill: 'none' }, g);
  });
  el('path', { d: ring('518,323 524,327 530,323 532,330 540,335 533,341 520,342 512,350 500,352 495,355 497,342 507,337 520,333', 0.4), fill: '#fff' }, g);
  var top = el('g', { stroke: '#0b1a2a', 'stroke-width': 0.7, 'stroke-linejoin': 'round' }, svg);
  isles.forEach(function (s) { el('path', { d: ring(s, 0.3), fill: '#2879b9' }, top); });
  darkIsles.forEach(function (s) { el('path', { d: ring(s, 0.4), fill: '#08306b' }, top); });
  el('path', { d: outline, fill: 'none' }, top);
  el('path', { d: ring('505,250 512,251 520,247 524,254 529,257 528,265 528,273 522,277 515,275 509,272 501,268 504,259', 0.3), fill: '#943f5c', stroke: '#f00', 'stroke-width': 3 }, top);
})();
```
